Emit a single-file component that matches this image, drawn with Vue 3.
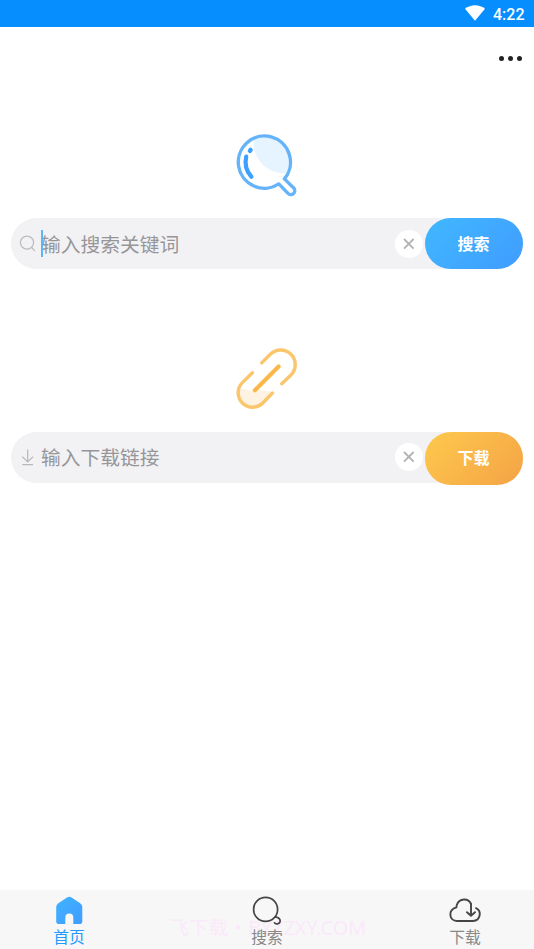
<script setup>
import { ref } from 'vue'

const keyword = ref('')
const link = ref('')
</script>

<template>
  <div class="screen">
    <header class="status">
      <svg class="wifi" width="20" height="16" viewBox="0 0 20 16"><path d="M0 3.8C5.5-.9 14.5-.9 20 3.8L10 15.8Z" fill="#fff" /></svg>
      <span class="clock">4:22</span>
    </header>
    <div class="toolbar">
      <button class="more" aria-label="更多"><i></i><i></i><i></i></button>
    </div>

    <main class="content">
      <section class="block first">
        <svg class="hero" width="66" height="68" viewBox="0 0 66 68" fill="none" stroke-linecap="round" stroke-linejoin="round">
          <path d="M19.5 8C32 2 46 5 53 14.5C58 22.5 58 32.5 53.5 41C36 43.5 18 28.5 19.5 8Z" fill="#e6f4ff" />
          <path d="M50.4 46.9A26.1 26.1 0 1 0 44.8 51.9L54 61.4A3.9 3.9 0 0 0 59.7 56Z" stroke="#65b4fa" stroke-width="3.4" />
          <path d="M12.2 24.6Q9.6 36.3 17.4 44.7" stroke="#3ba0ff" stroke-width="4.2" />
          <path d="M15.9 18.8L16.6 17.9" stroke="#3ba0ff" stroke-width="4.4" />
        </svg>
        <form class="field" @submit.prevent>
          <svg class="lead" width="18" height="18" viewBox="0 0 18 18" fill="none" stroke="#bcbcbf" stroke-width="1.25" stroke-linecap="round"><circle cx="8" cy="7.6" r="6.6" /><path d="M12.7 12.4L15.5 15.6" /></svg>
          <span class="entry"><span class="caret"></span>{{ keyword || '输入搜索关键词' }}</span>
          <button class="clear" type="button" aria-label="清除"><svg width="12" height="12" viewBox="0 0 12 12"><path d="M1 1L10.6 10.6M10.6 1L1 10.6" /></svg></button>
          <button class="submit blue">搜索</button>
        </form>
      </section>

      <section class="block second">
        <svg class="hero" width="66" height="68" viewBox="0 0 66 68" fill="none" stroke-linecap="round" stroke-linejoin="round">
          <path d="M4 45C9 40 14 46 20 44C26 42 29 46 37 45L28.6 57.6C20 65 4 59 4 45Z" fill="#fef3e2" />
          <g stroke="#fbc56b" stroke-width="3.4">
            <path d="M27.7 16.9L36.3 8.3A14.6 14.6 0 0 1 57 28.9L47.7 37.7" />
            <path d="M18.4 26.7L8.4 36.6A14.4 14.4 0 0 0 28.8 57L38.4 47" />
          </g>
          <path d="M20.9 44.2L44.6 20.6" stroke="#fbb84a" stroke-width="4.2" />
        </svg>
        <form class="field" @submit.prevent>
          <svg class="lead" width="18" height="18" viewBox="0 0 18 18" fill="none" stroke="#b8b8bb" stroke-width="1.25"><path d="M8.7 .6V12.6M3.3 7.6L8.7 12.9L14.1 7.6M3.3 15.6H14" /></svg>
          <span class="entry">{{ link || '输入下载链接' }}</span>
          <button class="clear" type="button" aria-label="清除"><svg width="12" height="12" viewBox="0 0 12 12"><path d="M1 1L10.6 10.6M10.6 1L1 10.6" /></svg></button>
          <button class="submit gold">下载</button>
        </form>
      </section>
    </main>

    <nav class="tabs">
      <span class="watermark">飞下载・BYZZXY.COM</span>
      <a class="tab active">
        <svg width="34" height="32" viewBox="0 0 34 32">
          <defs><linearGradient id="home" x1="0" y1="0" x2="1" y2="1"><stop stop-color="#40b4ff" /><stop offset="1" stop-color="#409cff" /></linearGradient></defs>
          <path d="M6.3 8.2L15 2.4Q17.3 1 19.6 2.4L28.2 8.2Q30.3 9.7 30.3 12V26.3Q30.3 29.1 27.5 29.1H21.3V22.8Q21.3 18.6 17.3 18.6Q13.3 18.6 13.3 22.8V29.1H7Q4.2 29.1 4.2 26.3V12Q4.2 9.7 6.3 8.2Z" fill="url(#home)" />
        </svg>
        <span>首页</span>
      </a>
      <a class="tab">
        <svg width="34" height="32" viewBox="0 0 34 32" fill="none" stroke="#454545" stroke-width="1.7" stroke-linecap="round"><circle cx="15.6" cy="14.4" r="12" /><path d="M25.3 21.8C28.8 22.4 30.8 24.5 30 26.9C29 29.5 26.2 29.4 24.5 27.9" /></svg>
        <span>搜索</span>
      </a>
      <a class="tab">
        <svg width="34" height="32" viewBox="0 0 34 32" fill="none" stroke="#454545" stroke-width="1.9" stroke-linecap="round" stroke-linejoin="round"><path d="M22.9 8.8C20.5 3 11.2 2.8 8.8 10C8.5 10.9 8.5 11.4 8.4 12.4C-.3 14.8.8 25.8 9 26H25C32.6 25.5 34 16 28 13.2" /><path d="M23 8.8V20.6M19 17.2L23 20.8L27 17.2" /></svg>
        <span>下载</span>
      </a>
    </nav>
  </div>
</template>

<style>
body { margin: 0; background: #fff; }
</style>

<style scoped>
.screen { height: 949px; display: flex; flex-direction: column; overflow: hidden; font-family: "Noto Sans", "Noto Sans CJK SC", sans-serif; background: #fff; }
button { border: 0; padding: 0; font: inherit; }
.status { height: 27px; box-sizing: border-box; padding-right: 9.5px; display: flex; justify-content: flex-end; align-items: center; gap: 8px; background: #068eff; flex: none; }
.wifi { margin-bottom: 1px; }
.clock { font: 500 16px/27px Roboto, sans-serif; color: #fff; padding-top: 2px; }
.toolbar { height: 62px; display: flex; justify-content: flex-end; align-items: center; padding-right: 12px; flex: none; }
.more { display: flex; gap: 4px; background: none; }
.more i { width: 5px; height: 5px; border-radius: 50%; background: #222; }
.content { flex: 1; padding: 43px 11px 0 11.4px; }
.block { display: flex; flex-direction: column; align-items: center; }
.second { margin-top: 76.5px; }
.hero { display: block; }
.field { align-self: stretch; height: 51.4px; margin-top: 18px; border-radius: 26px; background: #f2f2f5; display: flex; align-items: flex-start; }
.lead { margin: 17px 4px 0 7.5px; flex: none; }
.entry { position: relative; flex: 1; font-family: "Noto Sans CJK SC", sans-serif; font-size: 19.8px; line-height: 50px; color: #969699; }
.first .entry { line-height: 52px; }
.caret { position: absolute; left: 0; top: 12px; width: 2px; height: 27px; background: #5cb6f5; }
.clear { width: 28px; height: 28px; margin: 12px 2px 0 0; border-radius: 50%; background: #fff; display: flex; align-items: center; justify-content: center; }
.second .clear { margin-top: 11px; }
.clear path { stroke: #b2b2b2; stroke-width: 1.8; }
.submit { width: 98px; height: 51.4px; box-sizing: border-box; border-radius: 26px; color: #fff; font-family: "Noto Sans CJK SC", sans-serif; font-size: 16px; font-weight: 700; line-height: 24px; padding: 0 1px 2px 0; }
.blue { background: linear-gradient(135deg, #40b8ff, #409cff); }
.gold { height: 53px; background: linear-gradient(135deg, #fec94c, #f4a346); }
.tabs { position: relative; height: 59px; background: #f7f7f7; display: flex; justify-content: space-between; flex: none; }
.tab { position: relative; width: 138px; padding-top: 5px; box-sizing: border-box; display: flex; flex-direction: column; align-items: center; color: #888; font-family: "Noto Sans CJK SC", sans-serif; font-size: 15.8px; line-height: 20px; }
.tab svg { display: block; flex: none; }
.tab.active { color: #249aff; }
.watermark { position: absolute; left: 169px; top: 23px; font: 19.8px/29px "Noto Sans", "Noto Sans CJK SC", sans-serif; color: #fbe9fa; white-space: nowrap; }
</style>
